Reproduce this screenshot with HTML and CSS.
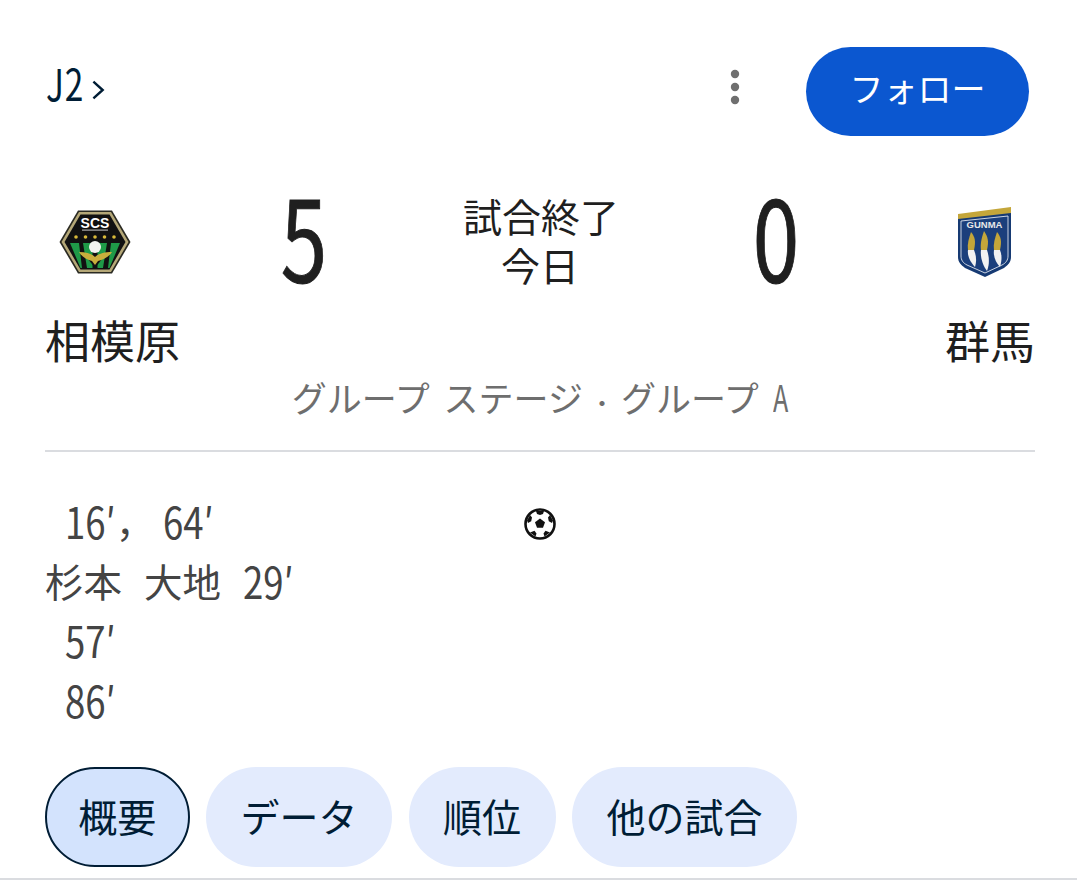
FILE: index.html
```html
<!DOCTYPE html>
<html lang="ja">
<head>
<meta charset="utf-8">
<title>相模原 対 群馬</title>
<link rel="stylesheet" href="styles.css">
</head>
<body>
<main class="card">
  <header class="top">
    <div class="league"><span class="league-name">J2</span>
      <svg class="chev" viewBox="0 0 14 22" width="13" height="22"><path d="M1.500 2l10 9-10 9" fill="none" stroke="#001d35" stroke-width="2.600"/></svg>
    </div>
    <div class="actions">
      <svg class="more" viewBox="0 0 10 36" width="10" height="36"><circle cx="5" cy="5" r="4.200"/><circle cx="5" cy="18" r="4.200"/><circle cx="5" cy="31" r="4.200"/></svg>
      <button class="follow">フォロー</button>
    </div>
  </header>

  <section class="match">
    <div class="logo-cell">
      <svg class="crest" viewBox="0 0 72 64" width="72" height="64">
        <polygon points="19,0.500 53,0.500 71.500,32 53,63.500 19,63.500 0.500,32" fill="#2a2a22"/>
        <polygon points="20,2 52,2 69.500,32 52,62 20,62 2.500,32" fill="#b5a878"/>
        <polygon points="21.500,4.500 50.500,4.500 66.500,32 50.500,59.500 21.500,59.500 5.500,32" fill="#111"/>
        <path d="M11 33h50l-10.500 25h-29z" fill="#1f9a48"/>
        <path d="M20 33h4l4 25h-5zM33.500 33h5v25h-5zM48 33h4l-3 25h-5z" fill="#111"/>
        <text x="36" y="18" class="scs">SCS</text>
        <rect x="23" y="19.500" width="26" height="1.200" fill="#aaa"/>
        <g fill="#d8b93a"><circle cx="17" cy="27" r="1.800"/><circle cx="26.500" cy="27" r="1.800"/><circle cx="36" cy="27" r="1.800"/><circle cx="45.500" cy="27" r="1.800"/><circle cx="55" cy="27" r="1.800"/></g>
        <path d="M36 58l-7-9h14z" fill="#111"/>
        <circle cx="36" cy="37" r="6" fill="#f4f4f0"/>
        <path d="M20 42c7 0 13 2 16 5 3-3 9-5 17-5-3 5-9 8-14 9l-3 4-3-4c-5-1-10-4-13-9z" fill="#c9ae3c"/>
      </svg>
    </div>
    <div class="score">5</div>
    <div class="status">
      <div>試合終了</div>
      <div>今日</div>
    </div>
    <div class="score">0</div>
    <div class="logo-cell">
      <svg class="crest" viewBox="0 0 56 72" width="56" height="72">
        <path d="M1 8L54 1v7L1 14z" fill="#c4a63a"/>
        <path d="M1 13L54 7v44c0 5-3 8-7 11L28 71 8 62c-4-3-7-6-7-11z" fill="#163a73"/>
        <path d="M4 15L51 10v40c0 4-2 7-6 9L28 67 10 59c-4-2-6-5-6-9z" fill="#1b3f7c" stroke="#dfe4ee" stroke-width="0.900"/>
        <text x="27.500" y="22" class="gunma">GUNMA</text>
        <g fill="#c4a63a"><path d="M14 26c4 5 5 9 3 18h-6c-1-6 1-12 3-18z"/><path d="M27 25c4 6 5 10 3 19h-6c-1-7 1-13 3-19z"/><path d="M40 26c4 5 5 9 3 18h-6c-1-6 1-12 3-18z"/></g>
        <g fill="#f2f2f2"><path d="M11 44h6c2 5 3 10 1 17-4-4-8-11-7-17z"/><path d="M24 44h6c2 6 3 13 0 21-4-5-7-14-6-21z"/><path d="M37 44h6c2 5 2 10 0 17-4-4-7-11-6-17z"/></g>
      </svg>
    </div>
  </section>

  <section class="teams">
    <span>相模原</span>
    <span>群馬</span>
  </section>
  <p class="stage">グループ ステージ<span class="stage-dot">・</span>グループ <span class="stage-letter">A</span></p>
  <hr class="divider">

  <section class="goals">
    <ul class="scorers">
      <li class="indent"><span class="cond">16′</span><span class="comma">，</span><span class="cond">64′</span></li>
      <li class="name-row"><span>杉本</span> <span>大地</span> <span class="cond">29′</span></li>
      <li class="indent"><span class="cond">57′</span></li>
      <li class="indent"><span class="cond">86′</span></li>
    </ul>
    <svg class="ball" viewBox="0 0 32 32" width="32" height="32">
      <circle cx="16" cy="16" r="14.500" fill="#fff" stroke="#111" stroke-width="2.600"/>
      <g fill="#111">
        <polygon points="16,10.500 21,14.200 19,19.800 13,19.800 11,14.200"/>
        <path d="M12 3h8l-1 3-3 1-3-1z"/>
        <path d="M3 12.500l3-5.500 2 2.500-.8 3.800-3.200 1.700z"/>
        <path d="M29 12.500l-3-5.500-2 2.500.8 3.800 3.200 1.700z"/>
        <path d="M6 24.500l4.500-1.800 2 2.800-1 3z"/>
        <path d="M26 24.500l-4.500-1.800-2 2.800 1 3z"/>
      </g>
    </svg>
  </section>

  <nav class="chips">
    <a class="chip chip-active">概要</a>
    <a class="chip">データ</a>
    <a class="chip">順位</a>
    <a class="chip">他の試合</a>
  </nav>
</main>
</body>
</html>
```

FILE: styles.css
```css
* { box-sizing: border-box; }
html, body { margin: 0; padding: 0; background: #fff; }
body {
  width: 1077px;
  height: 880px;
  overflow: hidden;
  font-family: "Noto Sans CJK JP", "Liberation Sans", sans-serif;
  color: #1f1f1f;
}
.card {
  height: 880px;
  padding: 47px 48px 0 45px;
  border-bottom: 2px solid #dadce0;
}
.top {
  display: flex;
  justify-content: space-between;
  align-items: center;
  height: 89px;
}
.league {
  display: flex;
  align-items: center;
  padding-left: 1px;
  color: #001d35;
  margin-bottom: 20px;
}
.league-name {
  display: inline-block;
  width: 46px;
  font-size: 44px;
  line-height: 60px;
  letter-spacing: 1px;
  transform: scaleX(.76);
  transform-origin: left center;
}
.chev { margin-top: 16px; }
.actions { display: flex; align-items: center; gap: 66px; }
.more { fill: #6f6f6f; margin-bottom: 10px; }
.follow {
  width: 223px;
  height: 89px;
  padding: 0 0 8px;
  border: 0;
  border-radius: 44.500px;
  background: #0b57d0;
  color: #fff;
  font: 34px "Noto Sans CJK JP", sans-serif;
}
.match {
  display: grid;
  grid-template-columns: 100px 318px 154px 318px 100px;
  align-items: center;
  width: 990px;
  height: 120px;
  margin-top: 44px;
}
.logo-cell { display: flex; justify-content: center; padding-top: 4px; }
.scs { font: 700 14px "Liberation Sans", sans-serif; fill: #fff; text-anchor: middle; }
.gunma { font: 700 9.500px "Liberation Sans", sans-serif; fill: #e8e8e8; text-anchor: middle; }
.score {
  padding-bottom: 11px;
  font-size: 113px;
  line-height: 109px;
  text-align: center;
  color: #1f1f1f;
  -webkit-text-stroke: 1px #1f1f1f;
  transform: scaleX(.74);
}
.status {
  padding-bottom: 1px;
  font: 39px/49px "Noto Sans CJK JP", sans-serif;
  text-align: center;
  white-space: nowrap;
  color: #1f1f1f;
}
.teams {
  display: flex;
  justify-content: space-between;
  width: 990px;
  margin-top: 13px;
  font: 45px/54px "Noto Sans CJK JP", sans-serif;
}
.stage {
  width: 990px;
  margin: 6px 0 0;
  font: 35px/46px "Noto Sans CJK JP", sans-serif;
  word-spacing: 6px;
  text-align: center;
  color: #6e6e6e;
}
.stage-dot {
  display: inline-block;
  width: 38px;
  font-size: 24px;
  text-align: center;
}
.stage-letter {
  display: inline-block;
  margin-right: -7px;
  font-size: 37px;
  transform: scaleX(.68);
  transform-origin: left center;
}
.divider {
  width: 990px;
  height: 2px;
  margin: 25px 0 0;
  border: 0;
  background: #dadce0;
}
.goals {
  display: grid;
  grid-template-columns: 1fr 32px 1fr;
  width: 990px;
  height: 240px;
  margin-top: 39px;
}
.scorers {
  margin: 0;
  padding: 0;
  list-style: none;
  font: 38.500px/59.500px "Noto Sans CJK JP", sans-serif;
  color: #444;
}
.scorers li { display: flex; height: 59.500px; white-space: nowrap; }
.indent { padding-left: 20px; }
.name-row { gap: 22px; }
.cond {
  display: inline-block;
  margin-right: -9px;
  font-size: 43px;
  transform: scaleX(.85);
  transform-origin: left center;
}
.comma { margin-right: 9px; }
.ball { margin-top: 17px; grid-column: 2; grid-row: 1; }
.chips {
  display: flex;
  gap: 16.500px;
  margin-top: 36px;
}
.chip {
  display: flex;
  align-items: center;
  height: 100px;
  padding: 0 34.500px 4px;
  border-radius: 50px;
  background: #e3ebfd;
  color: #001d35;
  font: 39px "Noto Sans CJK JP", sans-serif;
}
.chip-active {
  background: #d3e3fd;
  border: 2px solid #001d35;
  padding: 0 31.250px 4px;
}
```
